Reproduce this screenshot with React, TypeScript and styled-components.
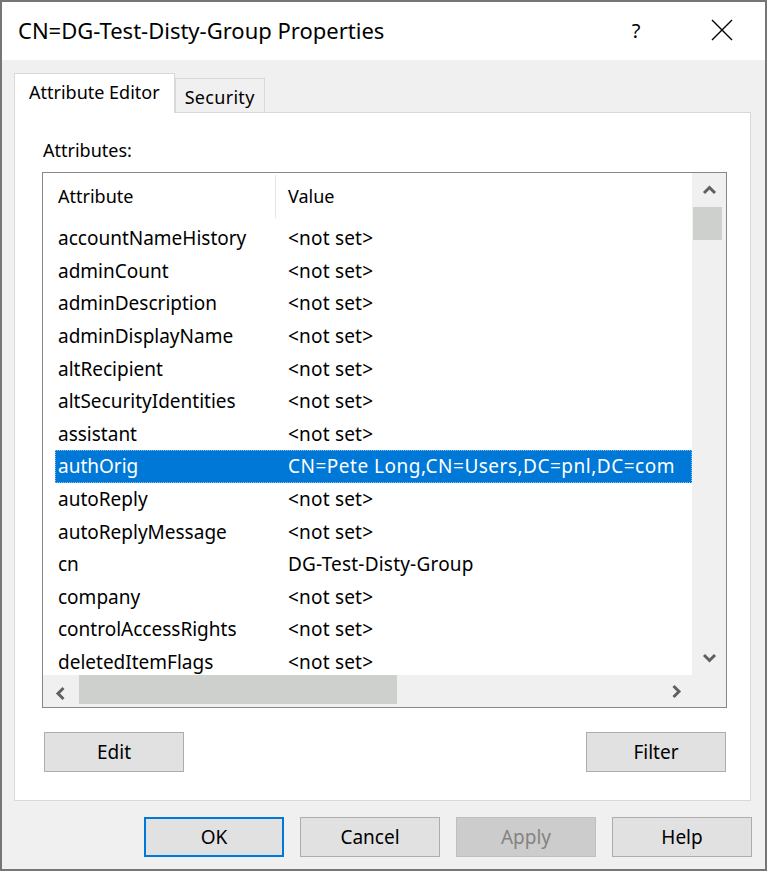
import React from 'react'
import styled, { createGlobalStyle } from 'styled-components'

interface AttributeRow {
  name: string
  value: string
}

const rows: AttributeRow[] = [
  { name: 'accountNameHistory', value: '<not set>' },
  { name: 'adminCount', value: '<not set>' },
  { name: 'adminDescription', value: '<not set>' },
  { name: 'adminDisplayName', value: '<not set>' },
  { name: 'altRecipient', value: '<not set>' },
  { name: 'altSecurityIdentities', value: '<not set>' },
  { name: 'assistant', value: '<not set>' },
  { name: 'authOrig', value: 'CN=Pete Long,CN=Users,DC=pnl,DC=com' },
  { name: 'autoReply', value: '<not set>' },
  { name: 'autoReplyMessage', value: '<not set>' },
  { name: 'cn', value: 'DG-Test-Disty-Group' },
  { name: 'company', value: '<not set>' },
  { name: 'controlAccessRights', value: '<not set>' },
  { name: 'deletedItemFlags', value: '<not set>' },
]

const SELECTED = 'authOrig'

const GlobalStyle = createGlobalStyle`
  html, body {
    margin: 0;
    padding: 0;
    background: #ffffff;
  }
  body {
    font-family: "Noto Sans", "Open Sans", "DejaVu Sans", sans-serif;
    color: #000;
  }
`

const Window = styled.div`
  width: 767px;
  height: 871px;
  box-sizing: border-box;
  border: 2px solid #767676;
  background: #f0f0f0;
  display: flex;
  flex-direction: column;
`

const TitleBar = styled.div`
  height: 58px;
  flex-shrink: 0;
  background: #ffffff;
  display: flex;
  align-items: center;
  padding-left: 16px;
`

const TitleText = styled.div`
  flex: 1;
  font-size: 22px;
  padding-bottom: 2px;
  white-space: nowrap;
`

const CaptionButton = styled.div`
  width: 86px;
  height: 58px;
  flex: none;
  display: flex;
  align-items: center;
  justify-content: center;
  font-size: 20px;
  padding-bottom: 2px;
  box-sizing: border-box;
`

const Body = styled.div`
  flex: 1;
  display: flex;
  flex-direction: column;
  padding: 13px 13px 0 12px;
`

const TabStrip = styled.div`
  display: flex;
  align-items: flex-end;
  height: 40px;
  margin-bottom: -1px;
  position: relative;
  z-index: 1;
`

const Tab = styled.div<{ $active?: boolean }>`
  box-sizing: border-box;
  display: flex;
  align-items: center;
  font-size: 18px;
  border: 1px solid #d9d9d9;
  border-bottom: none;
  height: ${(p) => (p.$active ? '40px' : '34px')};
  margin-bottom: ${(p) => (p.$active ? '0' : '1px')};
  padding: ${(p) => (p.$active ? '0 14px 3px 14px' : '3px 9px 0 9px')};
  background: ${(p) => (p.$active ? '#ffffff' : '#f0f0f0')};
  letter-spacing: ${(p) => (p.$active ? '0' : '0.3px')};
`

const Panel = styled.div`
  width: 737px;
  height: 689px;
  box-sizing: border-box;
  background: #ffffff;
  border: 1px solid #d9d9d9;
  padding: 24px 0 0 27px;
  display: flex;
  flex-direction: column;
`

const FieldLabel = styled.div`
  font-size: 18px;
  line-height: 26px;
  margin: 0 0 9px 1px;
`

const ListBox = styled.div`
  width: 685px;
  height: 536px;
  box-sizing: border-box;
  border: 1px solid #828790;
  display: grid;
  grid-template-columns: 1fr 34px;
  grid-template-rows: 1fr 32px;
  overflow: hidden;
`

const ListContent = styled.div`
  overflow: hidden;
  background: #ffffff;
  font-size: 19px;
`

const Header = styled.div`
  height: 49px;
  display: flex;
  align-items: stretch;
  font-size: 18px;
`

const HeaderCell = styled.div<{ $width?: number; $pad: number }>`
  box-sizing: border-box;
  width: ${(p) => (p.$width ? `${p.$width}px` : 'auto')};
  flex: ${(p) => (p.$width ? 'none' : '1')};
  padding-left: ${(p) => p.$pad}px;
  display: flex;
  align-items: center;
  padding-bottom: 1px;
  border-right: ${(p) => (p.$width ? '1px solid #e5e5e5' : 'none')};
  margin: 2px 0 4px 0;
`

const Row = styled.div<{ $selected?: boolean }>`
  height: 32.6px;
  margin-left: 12px;
  box-sizing: border-box;
  display: flex;
  align-items: center;
  white-space: nowrap;
  background: ${(p) => (p.$selected ? '#0078d7' : 'transparent')};
  color: ${(p) => (p.$selected ? '#ffffff' : '#000000')};
  outline: ${(p) => (p.$selected ? '1px dotted #8fc3ee' : 'none')};
  outline-offset: -1px;
`

const NameCell = styled.div`
  width: 233px;
  flex: none;
  box-sizing: border-box;
  padding-left: 3px;
`

const ValueCell = styled.div<{ $wide?: boolean }>`
  flex: 1;
  letter-spacing: ${(p) => (p.$wide ? '0.5px' : '0.2px')};
`

const ScrollTrack = styled.div<{ $vertical?: boolean }>`
  background: #f0f0f0;
  display: flex;
  flex-direction: ${(p) => (p.$vertical ? 'column' : 'row')};
`

const ArrowButton = styled.div<{ $size: number }>`
  flex: none;
  width: ${(p) => p.$size}px;
  height: ${(p) => p.$size}px;
  display: flex;
  align-items: center;
  justify-content: center;
`

const VThumb = styled.div`
  width: 29px;
  height: 33px;
  margin-left: 1px;
  background: #cdd0cd;
`

const HThumb = styled.div`
  width: 318px;
  height: 29px;
  background: #cdd0cd;
`

const Spacer = styled.div`
  flex: 1;
`

const Corner = styled.div`
  background: #f0f0f0;
`

const PanelButtons = styled.div`
  display: flex;
  justify-content: space-between;
  width: 685px;
  box-sizing: border-box;
  padding: 0 1px 0 2px;
  margin-top: 24px;
`

const Footer = styled.div`
  display: flex;
  justify-content: flex-end;
  gap: 16px;
  padding-top: 16px;
`

const Button = styled.div<{ $variant?: 'default' | 'disabled' }>`
  width: 140px;
  height: 40px;
  box-sizing: border-box;
  display: flex;
  align-items: center;
  justify-content: center;
  font-size: 19px;
  padding-bottom: 1px;
  background: ${(p) => (p.$variant === 'disabled' ? '#cccccc' : '#e1e1e1')};
  color: ${(p) => (p.$variant === 'disabled' ? '#838383' : '#000000')};
  border: ${(p) =>
    p.$variant === 'default'
      ? '2px solid #0078d7'
      : p.$variant === 'disabled'
        ? '1px solid #bfbfbf'
        : '1px solid #adadad'};
`

type Direction = 'up' | 'down' | 'left' | 'right'

const arrowPaths: Record<Direction, string> = {
  up: 'M2 9 L7.5 3.5 L13 9',
  down: 'M2 3 L7.5 8.5 L13 3',
  left: 'M8.5 2 L3 7.5 L8.5 13',
  right: 'M3.5 2 L9 7.5 L3.5 13',
}

const Chevron: React.FC<{ dir: Direction }> = ({ dir }) => {
  const wide = dir === 'up' || dir === 'down'
  return (
    <svg width={wide ? 15 : 12} height={wide ? 12 : 15} viewBox={wide ? '0 0 15 12' : '0 0 12 15'}>
      <path d={arrowPaths[dir]} fill="none" stroke="#606060" strokeWidth="3" strokeLinejoin="miter" />
    </svg>
  )
}

const CloseIcon: React.FC = () => (
  <svg width="22" height="22" viewBox="0 0 22 22">
    <path d="M1 1 L21 21 M21 1 L1 21" stroke="#000" strokeWidth="1.4" fill="none" />
  </svg>
)

const App: React.FC = () => {
  return (
    <>
      <GlobalStyle />
      <Window>
        <TitleBar>
          <TitleText>CN=DG-Test-Disty-Group Properties</TitleText>
          <CaptionButton>?</CaptionButton>
          <CaptionButton>
            <CloseIcon />
          </CaptionButton>
        </TitleBar>
        <Body>
          <TabStrip>
            <Tab $active>Attribute Editor</Tab>
            <Tab>Security</Tab>
          </TabStrip>
          <Panel>
            <FieldLabel>Attributes:</FieldLabel>
            <ListBox>
              <ListContent>
                <Header>
                  <HeaderCell $width={233} $pad={15}>
                    Attribute
                  </HeaderCell>
                  <HeaderCell $pad={12}>Value</HeaderCell>
                </Header>
                {rows.map((row) => (
                  <Row key={row.name} $selected={row.name === SELECTED}>
                    <NameCell>{row.name}</NameCell>
                    <ValueCell $wide={row.name === SELECTED}>{row.value}</ValueCell>
                  </Row>
                ))}
              </ListContent>
              <ScrollTrack $vertical>
                <ArrowButton $size={34}>
                  <Chevron dir="up" />
                </ArrowButton>
                <VThumb />
                <Spacer />
                <ArrowButton $size={34}>
                  <Chevron dir="down" />
                </ArrowButton>
              </ScrollTrack>
              <ScrollTrack>
                <ArrowButton $size={36}>
                  <Chevron dir="left" />
                </ArrowButton>
                <HThumb />
                <Spacer />
                <ArrowButton $size={32}>
                  <Chevron dir="right" />
                </ArrowButton>
              </ScrollTrack>
              <Corner />
            </ListBox>
            <PanelButtons>
              <Button>Edit</Button>
              <Button>Filter</Button>
            </PanelButtons>
          </Panel>
          <Footer>
            <Button $variant="default">OK</Button>
            <Button>Cancel</Button>
            <Button $variant="disabled">Apply</Button>
            <Button>Help</Button>
          </Footer>
        </Body>
      </Window>
    </>
  )
}

export default App
